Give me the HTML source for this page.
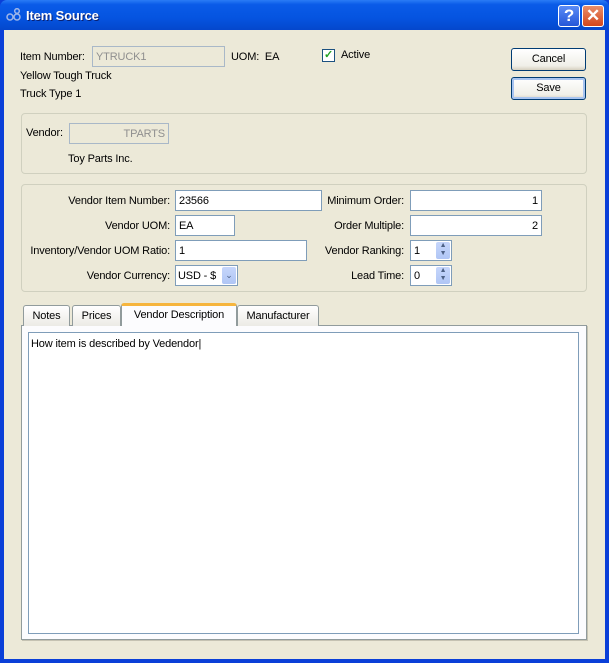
<!DOCTYPE html>
<html><head><style>
*{box-sizing:border-box;margin:0;padding:0}
body{width:609px;height:663px;overflow:hidden;background:#0a3fd8;font:11px "Liberation Sans",sans-serif;color:#000;position:relative;letter-spacing:-0.15px}
.a{position:absolute}
#title{left:0;top:0;width:609px;height:30px;background:linear-gradient(#2a7cf5 0,#0a5be8 15%,#0554e0 60%,#0447cc 100%);border-radius:7px 7px 0 0}
#body{left:4px;top:30px;width:601px;height:629px;background:#ece9d8}
.t{position:absolute;white-space:nowrap;line-height:13px}
.in{position:absolute;background:#fff;border:1px solid #7f9db9;height:21px;padding:4px 3px 2px;line-height:13px;white-space:nowrap}
.dis{background:#ece9d8;color:#8f8f8f;border-color:#a9b8c8}
.btn{position:absolute;border:1px solid #003c74;border-radius:3px;background:linear-gradient(#fff,#f0efe8 80%,#d6d0c0);text-align:center;line-height:21px}
.grp{position:absolute;border:1px solid #d0d0bf;border-radius:4px}
.spin{position:absolute;right:1px;top:1px;width:14px;height:17px;background:linear-gradient(#c6d6fb,#b0c6f5);border-radius:2px;font-size:7px;color:#4d6185;text-align:center;line-height:8px}
.tab{position:absolute;top:305px;height:21px;border:1px solid #919b9c;border-bottom:none;border-radius:3px 3px 0 0;background:linear-gradient(#fff,#ecebe5);text-align:center;line-height:20px}
</style></head><body>
<div class="a" id="title"></div>
<svg class="a" style="left:6px;top:8px" width="16" height="14"><circle cx="4" cy="9" r="3" fill="none" stroke="#9fb6e8" stroke-width="1.5"/><circle cx="11" cy="9" r="3" fill="none" stroke="#9fb6e8" stroke-width="1.5"/><circle cx="11" cy="3" r="2.3" fill="none" stroke="#9fb6e8" stroke-width="1.5"/></svg>
<div class="t" style="left:26px;top:9px;color:#fff;font-weight:bold;font-size:13px;text-shadow:1px 1px #0a1f6e">Item Source</div>
<div class="a" style="left:558px;top:5px;width:22px;height:22px;border:1px solid #fff;border-radius:3px;background:linear-gradient(#5b8cf6,#2456d8);color:#fff;font:bold 17px 'Liberation Sans';text-align:center;line-height:20px">?</div>
<div class="a" style="left:582px;top:5px;width:22px;height:22px;border:1px solid #fff;border-radius:3px;background:linear-gradient(#e98e6a,#d2461c);color:#fff;font:bold 17px 'Liberation Sans';text-align:center;line-height:20px">✕</div>
<div class="a" id="body"></div>

<div class="t" style="left:20px;top:51px">Item Number:</div>
<div class="in dis" style="left:92px;top:46px;width:133px">YTRUCK1</div>
<div class="t" style="left:231px;top:51px">UOM:&nbsp; EA</div>
<div class="a" style="left:322px;top:49px;width:13px;height:13px;border:1px solid #1c5180;background:#fff;color:#21a121;font-size:11px;line-height:11px;text-align:center;font-weight:bold">✓</div>
<div class="t" style="left:341px;top:49px">Active</div>
<div class="btn" style="left:511px;top:48px;width:75px;height:23px">Cancel</div>
<div class="btn" style="left:511px;top:77px;width:75px;height:23px;box-shadow:inset 0 0 0 2px #a8c4f0">Save</div>
<div class="t" style="left:20px;top:70px">Yellow Tough Truck</div>
<div class="t" style="left:20px;top:88px">Truck Type 1</div>

<div class="grp" style="left:21px;top:113px;width:566px;height:61px"></div>
<div class="t" style="left:26px;top:127px">Vendor:</div>
<div class="in dis" style="left:69px;top:123px;width:100px;text-align:right">TPARTS</div>
<div class="t" style="left:68px;top:153px">Toy Parts Inc.</div>

<div class="grp" style="left:21px;top:184px;width:566px;height:108px"></div>
<div class="t" style="left:0;width:170px;text-align:right;top:195px">Vendor Item Number:</div>
<div class="in" style="left:175px;top:190px;width:147px">23566</div>
<div class="t" style="left:0;width:170px;text-align:right;top:220px">Vendor UOM:</div>
<div class="in" style="left:175px;top:215px;width:60px">EA</div>
<div class="t" style="left:0;width:170px;text-align:right;top:245px">Inventory/Vendor UOM Ratio:</div>
<div class="in" style="left:175px;top:240px;width:132px">1</div>
<div class="t" style="left:0;width:170px;text-align:right;top:270px">Vendor Currency:</div>
<div class="in" style="left:175px;top:265px;width:63px;padding-left:2px">USD - $<div class="spin" style="line-height:17px;font-size:9px">⌄</div></div>
<div class="t" style="left:250px;width:154px;text-align:right;top:195px">Minimum Order:</div>
<div class="in" style="left:410px;top:190px;width:132px;text-align:right">1</div>
<div class="t" style="left:250px;width:154px;text-align:right;top:220px">Order Multiple:</div>
<div class="in" style="left:410px;top:215px;width:132px;text-align:right">2</div>
<div class="t" style="left:250px;width:154px;text-align:right;top:245px">Vendor Ranking:</div>
<div class="in" style="left:410px;top:240px;width:42px">1<div class="spin">▲<br>▼</div></div>
<div class="t" style="left:250px;width:154px;text-align:right;top:270px">Lead Time:</div>
<div class="in" style="left:410px;top:265px;width:42px">0<div class="spin">▲<br>▼</div></div>

<div class="a" style="left:21px;top:325px;width:566px;height:315px;background:#fcfcfe;border:1px solid #919b9c;box-shadow:1px 1px 0 #c5c2b2"></div>
<div class="tab" style="left:23px;width:47px">Notes</div>
<div class="tab" style="left:72px;width:49px">Prices</div>
<div class="tab" style="left:237px;width:82px">Manufacturer</div>
<div class="tab" style="left:121px;width:116px;top:303px;height:23px;background:#fcfcfe;border-top:3px solid #f6b53d;line-height:18px">Vendor Description</div>
<div class="a" style="left:28px;top:332px;width:551px;height:302px;background:#fff;border:1px solid #7f9db9"></div>
<div class="t" style="left:31px;top:338px">How item is described by Vedendor|</div>
</body></html>
